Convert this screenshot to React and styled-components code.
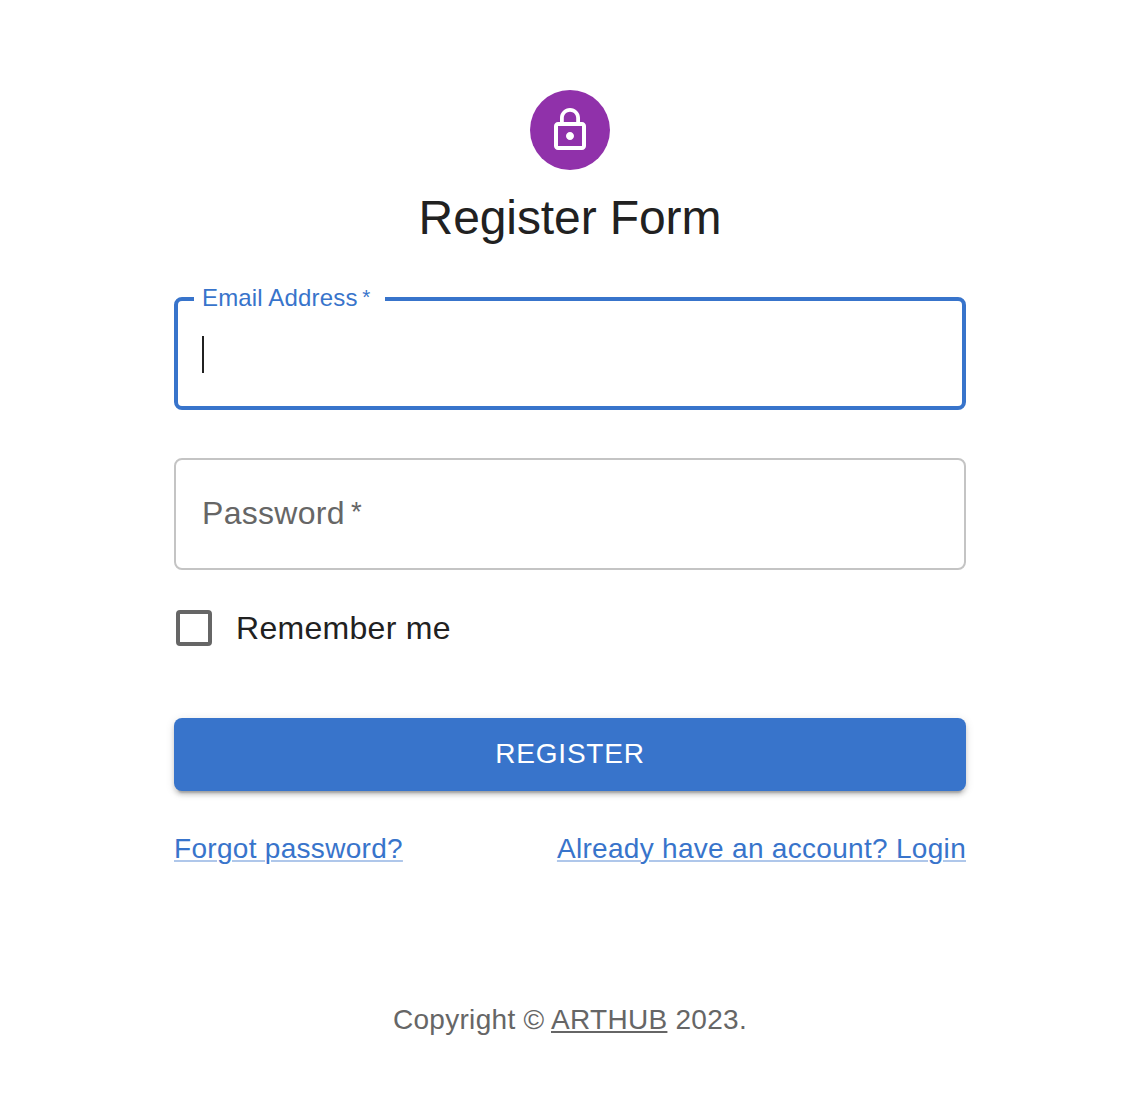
import React from "react";
import styled, { createGlobalStyle } from "styled-components";

const GlobalStyle = createGlobalStyle`
  *, *::before, *::after { box-sizing: border-box; }
  body {
    margin: 0;
    background: #fff;
    color: #212121;
    font-family: "Liberation Sans", Arial, sans-serif;
    font-size: 32px;
    letter-spacing: 0.00938em;
  }
`;

const Page = styled.main`
  display: flex;
  flex-direction: column;
  align-items: center;
  width: 792px;
  margin: 0 0 0 174px;
  padding-top: 90px;
`;

const Avatar = styled.div`
  display: flex;
  align-items: center;
  justify-content: center;
  width: 80px;
  height: 80px;
  border-radius: 50%;
  background: #9031aa;
`;

const LockIcon = styled.svg`
  width: 48px;
  height: 48px;
  fill: #fff;
`;

const Title = styled.h1`
  margin: 16px 0 0;
  font-size: 48px;
  font-weight: 400;
  line-height: 64px;
  letter-spacing: -0.002em;
`;

const Form = styled.form`
  display: flex;
  flex-direction: column;
  width: 100%;
  margin-top: 38px;
`;

const FocusedField = styled.fieldset`
  height: 122px;
  min-width: 0;
  margin: 0;
  padding: 21px 16px 0;
  border: 4px solid #3874cb;
  border-radius: 8px;
`;

const FieldLabel = styled.legend`
  width: 191px;
  height: 22px;
  padding: 0 0 0 8px;
  color: #3874cb;
  font-size: 24px;
  line-height: 20px;
  letter-spacing: 0.007em;
  white-space: nowrap;
`;

const Asterisk = styled.span`
  margin-left: -0.02em;
  font-size: 0.86em;
  line-height: 0;
  vertical-align: 0.12em;
`;

const InputRow = styled.div`
  display: flex;
  align-items: center;
  height: 46px;
`;

const Caret = styled.span`
  flex: none;
  width: 2px;
  height: 37px;
  margin: 0 0 0 8px;
  background: #212121;
`;

const Input = styled.input`
  flex: 1;
  min-width: 0;
  height: 46px;
  padding: 0;
  border: 0;
  outline: 0;
  background: transparent;
  color: inherit;
  font: inherit;
  letter-spacing: inherit;
`;

const Field = styled.label`
  display: flex;
  align-items: center;
  height: 112px;
  margin-top: 48px;
  padding: 0 26px 2px;
  border: 2px solid #c4c4c4;
  border-radius: 8px;
`;

const RestingLabel = styled.span`
  color: #666;
  line-height: 46px;
  white-space: nowrap;
`;

const CheckRow = styled.label`
  display: flex;
  align-items: center;
  gap: 24px;
  height: 36px;
  margin-top: 40px;
  padding-left: 2px;
  line-height: 36px;
`;

const Checkbox = styled.input`
  appearance: none;
  flex: none;
  width: 36px;
  height: 36px;
  margin: 0;
  border: 4px solid #666;
  border-radius: 4px;
`;

const SubmitButton = styled.button`
  height: 73px;
  margin-top: 72px;
  padding: 0 0 2px;
  border: 0;
  border-radius: 8px;
  background: #3874cb;
  box-shadow:
    0 6px 2px -4px rgba(0, 0, 0, 0.2),
    0 4px 4px 0 rgba(0, 0, 0, 0.14),
    0 2px 10px 0 rgba(0, 0, 0, 0.12);
  color: #fff;
  font: inherit;
  font-size: 28px;
  letter-spacing: 0.02857em;
  text-transform: uppercase;
`;

const Links = styled.nav`
  display: flex;
  justify-content: space-between;
  margin-top: 38px;
`;

const Link = styled.a`
  color: #3874cb;
  font-size: 28px;
  line-height: 40px;
  letter-spacing: 0.01071em;
  text-decoration: underline;
  text-decoration-color: #afc7ea;
  text-decoration-thickness: 2px;
  text-underline-offset: 2px;
`;

const Copyright = styled.footer`
  margin-top: 131px;
  color: #666;
  font-size: 28px;
  line-height: 40px;
  letter-spacing: 0.01071em;
`;

const BrandLink = styled.a`
  color: inherit;
  text-decoration: underline;
  text-decoration-thickness: 2px;
  text-underline-offset: 2px;
`;

export default function App() {
  return (
    <>
      <GlobalStyle />
      <Page>
        <Avatar>
          <LockIcon viewBox="0 0 24 24" aria-hidden="true">
            <path d="M12 17c1.1 0 2-.9 2-2s-.9-2-2-2-2 .9-2 2 .9 2 2 2zm6-9h-1V6c0-2.76-2.24-5-5-5S7 3.24 7 6v2H6c-1.1 0-2 .9-2 2v10c0 1.1.9 2 2 2h12c1.1 0 2-.9 2-2V10c0-1.1-.9-2-2-2zM8.9 6c0-1.71 1.39-3.1 3.1-3.1s3.1 1.39 3.1 3.1v2H8.9V6zM18 20H6V10h12v10z" />
          </LockIcon>
        </Avatar>
        <Title>Register Form</Title>
        <Form>
          <FocusedField>
            <FieldLabel>
              Email Address{"\u2009"}
              <Asterisk>*</Asterisk>
            </FieldLabel>
            <InputRow>
              <Caret />
              <Input type="email" aria-label="Email Address" />
            </InputRow>
          </FocusedField>
          <Field>
            <RestingLabel>
              Password{"\u2009"}
              <Asterisk>*</Asterisk>
            </RestingLabel>
            <Input type="password" />
          </Field>
          <CheckRow>
            <Checkbox type="checkbox" />
            Remember me
          </CheckRow>
          <SubmitButton type="button">Register</SubmitButton>
          <Links>
            <Link href="#">Forgot password?</Link>
            <Link href="#">Already have an account? Login</Link>
          </Links>
        </Form>
        <Copyright>
          Copyright © <BrandLink href="#">ARTHUB</BrandLink> 2023.
        </Copyright>
      </Page>
    </>
  );
}
